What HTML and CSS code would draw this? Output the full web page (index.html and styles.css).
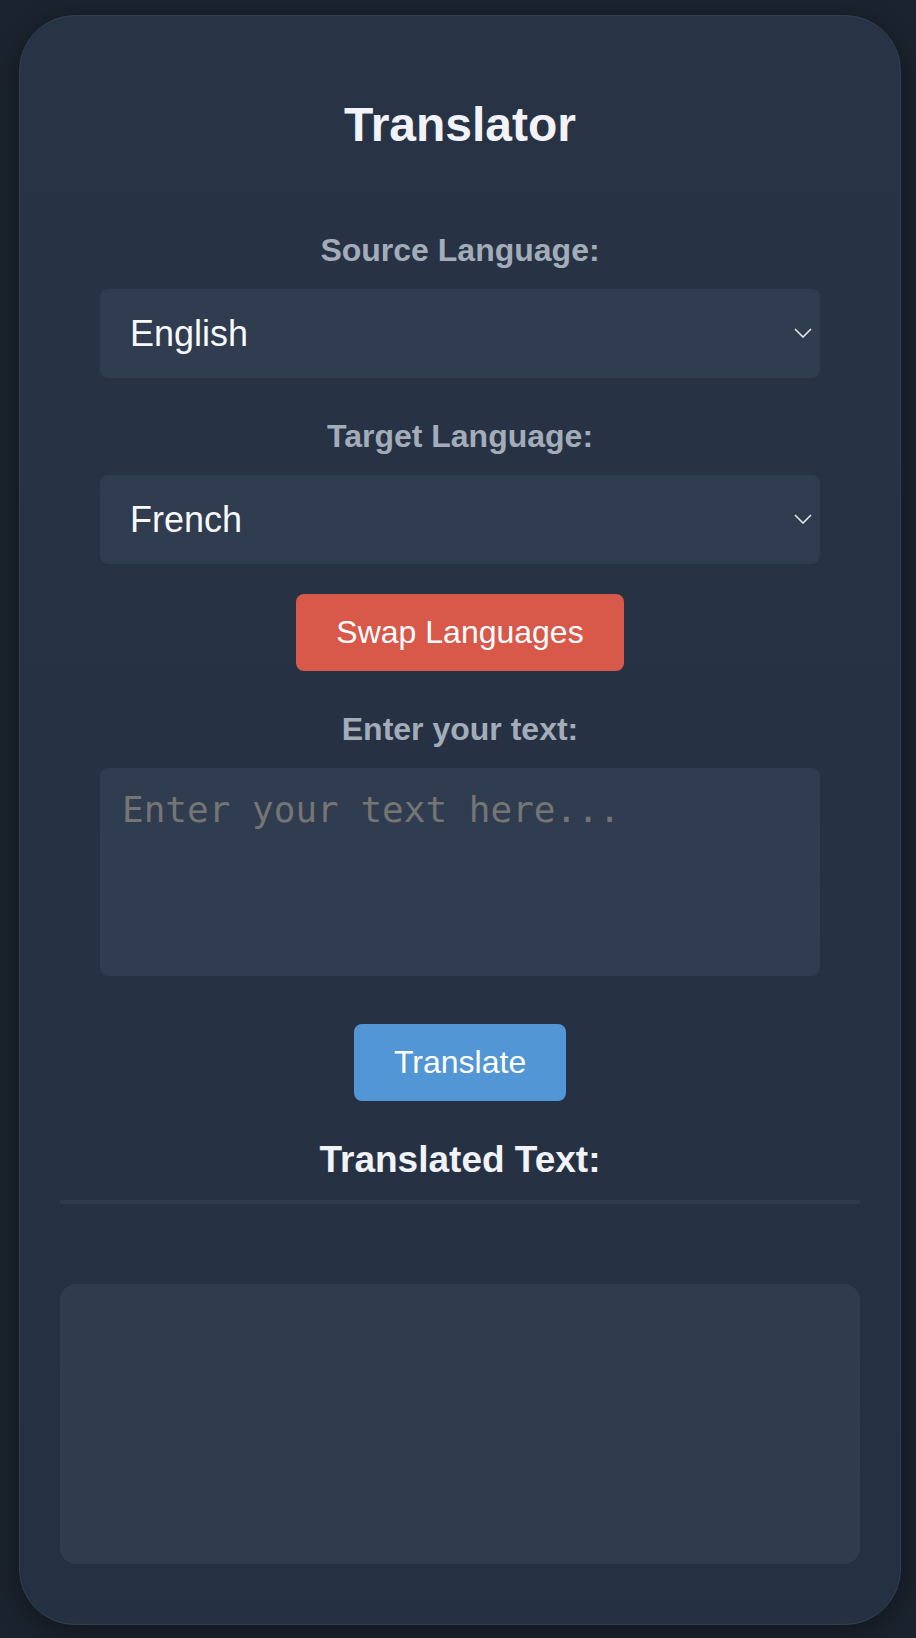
FILE: index.html
```html
<!DOCTYPE html>
<html lang="en">
<head>
<meta charset="utf-8">
<title>Translator</title>
<link rel="stylesheet" href="styles.css">
</head>
<body>
<main class="card">
  <h1 class="title">Translator</h1>
  <div class="form">
    <label class="field-label" for="src">Source Language:</label>
    <div class="select-wrap">
      <select id="src" class="select"><option>English</option><option>French</option></select>
      <svg class="chevron" width="18" height="10" viewBox="0 0 18 10"><path d="M1 1 L9 9 L17 1" fill="none" stroke="#e2e8f0" stroke-width="1.6"/></svg>
    </div>
    <label class="field-label" for="tgt">Target Language:</label>
    <div class="select-wrap">
      <select id="tgt" class="select"><option>French</option><option>English</option></select>
      <svg class="chevron" width="18" height="10" viewBox="0 0 18 10"><path d="M1 1 L9 9 L17 1" fill="none" stroke="#e2e8f0" stroke-width="1.6"/></svg>
    </div>
    <div class="btn-row"><button class="btn btn-swap">Swap Languages</button></div>
    <label class="field-label label-text" for="txt">Enter your text:</label>
    <textarea id="txt" class="textarea" placeholder="Enter your text here..."></textarea>
    <div class="btn-row btn-row-translate"><button class="btn btn-translate">Translate</button></div>
  </div>
  <h2 class="result-title">Translated Text:</h2>
  <div class="divider"></div>
  <div class="output"></div>
</main>
</body>
</html>
```
FILE: styles.css
```css
html, body {
  margin: 0;
  padding: 0;
}
body {
  background: #1b232e;
  padding: 15px 15px 0 19px;
  font-family: "Liberation Sans", Arial, sans-serif;
  min-height: 1638px;
  box-sizing: border-box;
}
.card {
  display: block;
  background: linear-gradient(180deg, #283446 0%, #253142 100%);
  border: 1px solid #333f51;
  border-radius: 56px;
  padding: 40px 40px 40px 40px;
  box-shadow: 0 8px 30px rgba(0, 0, 0, 0.35);
}
.title {
  margin: 41px 0 79px;
  font-size: 48px;
  line-height: 56px;
  font-weight: 700;
  text-align: center;
  color: #f1f3f8;
}
.form {
  margin: 0 40px;
  display: flex;
  flex-direction: column;
}
.field-label {
  display: block;
  font-size: 32px;
  line-height: 37px;
  font-weight: 700;
  color: #a3adb9;
  text-align: center;
  margin-bottom: 19.5px;
}
.select-wrap {
  position: relative;
  margin-bottom: 40.5px;
}
.select {
  -webkit-appearance: none;
  appearance: none;
  display: block;
  width: 100%;
  height: 89px;
  margin: 0;
  padding: 0 30px;
  border: none;
  border-radius: 8px;
  background: #303c4f;
  color: #f7f9fc;
  font-family: "Liberation Sans", Arial, sans-serif;
  font-size: 36px;
  outline: none;
}
.chevron {
  position: absolute;
  right: 8px;
  top: 50%;
  margin-top: -5px;
  pointer-events: none;
}
.btn-row {
  display: flex;
  justify-content: center;
}
.btn-row-translate {
  margin-top: 48px;
}
.btn {
  border: none;
  border-radius: 8px;
  padding: 20px 40px;
  font-family: "Liberation Sans", Arial, sans-serif;
  font-size: 32px;
  line-height: 37px;
  color: #ffffff;
  cursor: pointer;
}
.btn-swap {
  margin-top: -10.5px;
  background: #d8584a;
  width: 328px;
}
.btn-translate {
  background: #5296d5;
  width: 212px;
}
.label-text {
  margin-top: 40.5px;
  margin-bottom: 19.5px;
}
.textarea {
  display: block;
  box-sizing: border-box;
  width: 100%;
  height: 208px;
  margin: 0;
  padding: 21px 22px;
  border: none;
  border-radius: 8px;
  background: #303c4f;
  color: #f7f9fc;
  font-family: "DejaVu Sans Mono", monospace;
  font-size: 36px;
  resize: none;
  outline: none;
}
.textarea::placeholder {
  color: #757575;
}
.result-title {
  margin: 37.4px 0 19.6px;
  font-size: 37px;
  line-height: 43px;
  font-weight: 700;
  text-align: center;
  color: #f1f3f8;
}
.divider {
  height: 4px;
  background: #2f3b4d;
  margin-bottom: 80px;
}
.output {
  height: 280px;
  border-radius: 16px;
  background: #303c4e;
  margin-bottom: 20px;
}
```
